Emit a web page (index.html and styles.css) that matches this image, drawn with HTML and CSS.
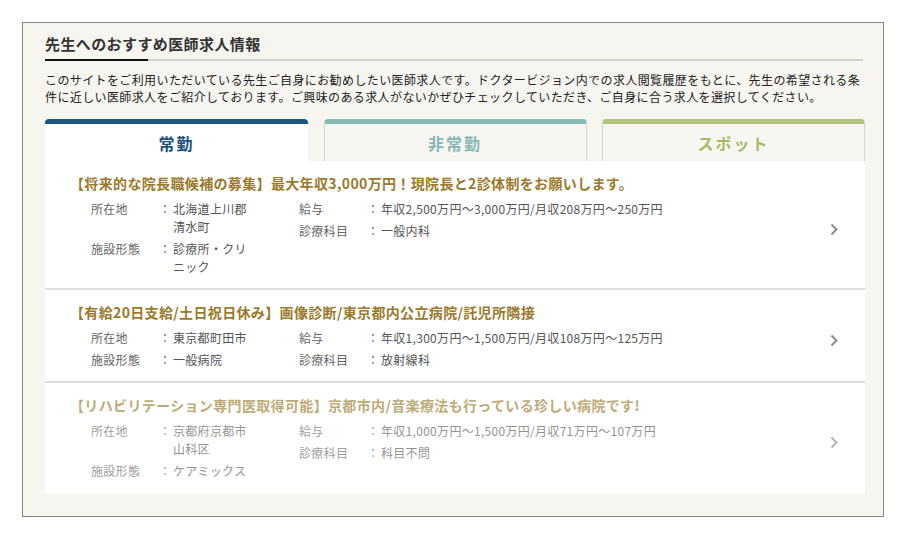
FILE: index.html
```html
<!DOCTYPE html>
<html lang="ja">
<head>
<meta charset="utf-8">
<link rel="stylesheet" href="styles.css">
</head>
<body>
<section class="box">
  <h2 class="heading"><span>先生へのおすすめ医師求人情報</span></h2>
  <p class="desc">このサイトをご利用いただいている先生ご自身にお勧めしたい医師求人です。ドクタービジョン内での求人閲覧履歴をもとに、先生の希望される条件に近しい医師求人をご紹介しております。ご興味のある求人がないかぜひチェックしていただき、ご自身に合う求人を選択してください。</p>
  <div class="tabs">
    <div class="tab tab-full active">常勤</div>
    <div class="tab tab-part">非常勤</div>
    <div class="tab tab-spot">スポット</div>
  </div>
  <div class="panel">
    <a class="job">
      <div class="job-body">
        <h3 class="job-title">【将来的な院長職候補の募集】最大年収3,000万円！現院長と2診体制をお願いします。</h3>
        <div class="specs">
          <dl class="col col-left">
            <div class="row"><dt>所在地</dt><span class="colon">：</span><dd>北海道上川郡清水町</dd></div>
            <div class="row"><dt>施設形態</dt><span class="colon">：</span><dd>診療所・クリニック</dd></div>
          </dl>
          <dl class="col col-right">
            <div class="row"><dt>給与</dt><span class="colon">：</span><dd>年収2,500万円～3,000万円/月収208万円～250万円</dd></div>
            <div class="row"><dt>診療科目</dt><span class="colon">：</span><dd>一般内科</dd></div>
          </dl>
        </div>
      </div>
      <svg class="chev" width="8" height="13" viewBox="0 0 8 13"><path d="M1.5 1.5 L6.5 6.5 L1.5 11.5" fill="none" stroke="#8c8c8c" stroke-width="2"/></svg>
    </a>
    <a class="job">
      <div class="job-body">
        <h3 class="job-title">【有給20日支給/土日祝日休み】画像診断/東京都内公立病院/託児所隣接</h3>
        <div class="specs">
          <dl class="col col-left">
            <div class="row"><dt>所在地</dt><span class="colon">：</span><dd>東京都町田市</dd></div>
            <div class="row"><dt>施設形態</dt><span class="colon">：</span><dd>一般病院</dd></div>
          </dl>
          <dl class="col col-right">
            <div class="row"><dt>給与</dt><span class="colon">：</span><dd>年収1,300万円～1,500万円/月収108万円～125万円</dd></div>
            <div class="row"><dt>診療科目</dt><span class="colon">：</span><dd>放射線科</dd></div>
          </dl>
        </div>
      </div>
      <svg class="chev" width="8" height="13" viewBox="0 0 8 13"><path d="M1.5 1.5 L6.5 6.5 L1.5 11.5" fill="none" stroke="#8c8c8c" stroke-width="2"/></svg>
    </a>
    <a class="job job-faded">
      <div class="job-body">
        <h3 class="job-title">【リハビリテーション専門医取得可能】京都市内/音楽療法も行っている珍しい病院です!</h3>
        <div class="specs">
          <dl class="col col-left">
            <div class="row"><dt>所在地</dt><span class="colon">：</span><dd>京都府京都市山科区</dd></div>
            <div class="row"><dt>施設形態</dt><span class="colon">：</span><dd>ケアミックス</dd></div>
          </dl>
          <dl class="col col-right">
            <div class="row"><dt>給与</dt><span class="colon">：</span><dd>年収1,000万円～1,500万円/月収71万円～107万円</dd></div>
            <div class="row"><dt>診療科目</dt><span class="colon">：</span><dd>科目不問</dd></div>
          </dl>
        </div>
      </div>
      <svg class="chev" width="8" height="13" viewBox="0 0 8 13"><path d="M1.5 1.5 L6.5 6.5 L1.5 11.5" fill="none" stroke="#8c8c8c" stroke-width="2"/></svg>
    </a>
  </div>
</section>
</body>
</html>
```

FILE: styles.css
```css
* { box-sizing: border-box; }
html, body { margin: 0; padding: 0; background: #fff; }
body {
  padding: 22px;
  font-family: "Noto Sans CJK JP", "Noto Sans", sans-serif;
  color: #333;
}
.box {
  width: 862px;
  height: 495px;
  border: 1px solid #858585;
  background: #f6f5f0;
  padding: 10px 17px 22px 22px;
}
.heading {
  margin: 0;
  font-size: 15px;
  line-height: 22px;
  font-weight: 700;
  letter-spacing: 0.4px;
  color: #333;
  border-bottom: 2px solid #cfcfcf;
  padding-bottom: 4px;
  position: relative;
  width: 818px;
}
.heading::after {
  content: "";
  position: absolute;
  left: 0;
  bottom: -2px;
  width: 103px;
  height: 2px;
  background: #111;
}
.desc {
  margin: 10px 0 0;
  font-size: 12px;
  line-height: 17px;
  letter-spacing: 0.39px;
  color: #222;
  width: 820px;
}
.tabs {
  margin-top: 14px;
  width: 820px;
  display: flex;
  justify-content: space-between;
}
.tab {
  width: 263px;
  height: 42px;
  border-top: 5px solid;
  border-radius: 4px 4px 0 0;
  background: #f7f6f2;
  border-left: 1px solid #d4d4d4;
  border-right: 1px solid #d4d4d4;
  display: flex;
  align-items: center;
  justify-content: center;
  font-size: 16px;
  font-weight: 700;
  letter-spacing: 2px;
}
.tab.active { background: #fff; border-left: 0; border-right: 0; }
.tab-full { border-top-color: #1b5580; color: #1d4f7b; }
.tab-part { border-top-color: #88bab4; color: #86b8b2; }
.tab-spot { border-top-color: #b3c47a; color: #a8ba68; }
.panel {
  width: 820px;
  background: #fff;
}
.job {
  display: flex;
  align-items: center;
  padding: 12px 27px 12px 25px;
  border-bottom: 2px solid #dedede;
  color: inherit;
  text-decoration: none;
}
.job:last-child { border-bottom: 0; padding-bottom: 14px; }
.job-faded { opacity: 0.63; }
.job-body { flex: 1; }
.job-title {
  margin: 0 0 7px;
  font-size: 14px;
  line-height: 20px;
  font-weight: 700;
  letter-spacing: 0.35px;
  color: #9a7a2c;
}
.specs {
  display: flex;
  margin-left: 21px;
}
.col {
  margin: 0;
  display: flex;
  flex-direction: column;
  gap: 4px;
}
.col-left { width: 208px; }
.row {
  display: grid;
  grid-template-columns: 68px 14px auto;
  font-size: 12px;
  line-height: 18px;
  letter-spacing: 0.3px;
  color: #666;
}
.col-left .row { grid-template-columns: 68px 14px 80px; }
.row dt { margin: 0; }
.row dd { margin: 0; color: #555; }
.colon { color: #666; }
.chev { flex: none; margin-top: 10px; }
```
